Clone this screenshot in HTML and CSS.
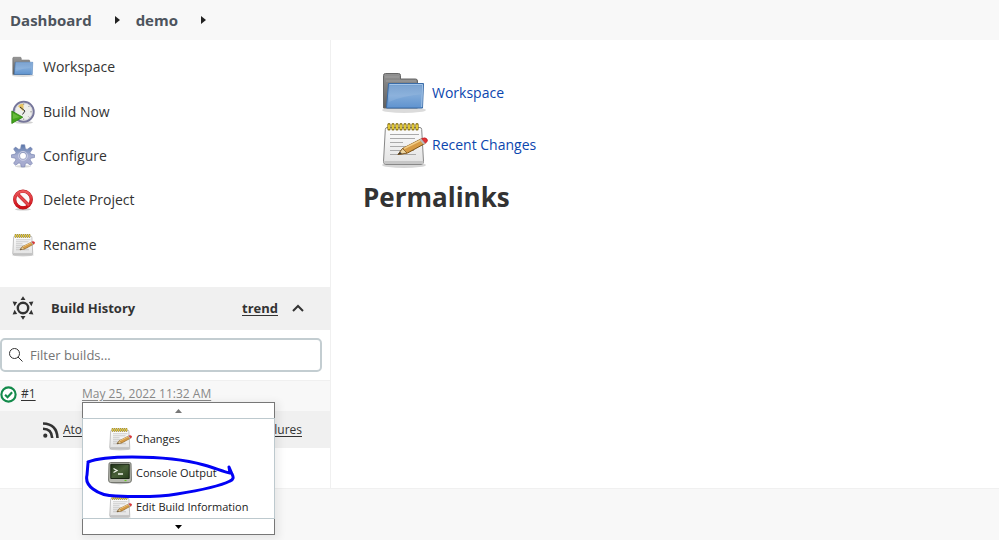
FILE: index.html
```html
<!DOCTYPE html>
<html lang="en">
<head>
<meta charset="utf-8">
<meta name="viewport" content="width=device-width, initial-scale=1">
<title>demo [Jenkins]</title>
<link rel="stylesheet" href="styles.css">
</head>
<body>
<svg class="sprite" aria-hidden="true">
  <defs>
    <linearGradient id="g-blue" x1="0" y1="0" x2="0" y2="1"><stop offset="0" stop-color="#6c98cb"/><stop offset=".5" stop-color="#7fa9d8"/><stop offset="1" stop-color="#5f93cf"/></linearGradient>
    <linearGradient id="g-grey" x1="0" y1="0" x2="0" y2="1"><stop offset="0" stop-color="#929292"/><stop offset="1" stop-color="#5e5e5e"/></linearGradient>
    <linearGradient id="g-paper" x1="0" y1="0" x2="0" y2="1"><stop offset="0" stop-color="#fdfdfd"/><stop offset="1" stop-color="#e2e2e2"/></linearGradient>
    <linearGradient id="g-gear" x1="0" y1="0" x2="0" y2="1"><stop offset="0" stop-color="#5877aa"/><stop offset=".5" stop-color="#a9b0d2"/><stop offset="1" stop-color="#a5a8cd"/></linearGradient>
    <linearGradient id="g-term" x1="0" y1="0" x2="1" y2="1"><stop offset="0" stop-color="#1d3014"/><stop offset=".5" stop-color="#496038"/><stop offset="1" stop-color="#263d1c"/></linearGradient>
    <linearGradient id="g-red" x1="0" y1="0" x2="0" y2="1"><stop offset="0" stop-color="#ed5a5e"/><stop offset="1" stop-color="#cc0c14"/></linearGradient>
  </defs>
  <symbol id="folder" viewBox="0 0 48 48">
    <ellipse cx="24" cy="41" rx="22" ry="3" fill="#000" opacity=".14"/>
    <path d="M3.500 39V6.500q0-2 2-2h13q2 0 2 2V10h15q2 0 2 2v27z" fill="url(#g-grey)" stroke="#666" />
    <path d="M5 8h14M6 12h30" stroke="#aaa" opacity=".7"/>
    <path d="M8.500 14.500h35l-1 24.500h-36z" fill="url(#g-blue)" stroke="#3a6ca8"/>
    <path d="M9.500 15.500h33l-.8 22.500" fill="none" stroke="#a5c5e8"/>
    <path d="M9.500 16.500h32l-.4 9Q25 26 9 33z" fill="#fff" opacity=".1"/>
  </symbol>
  <symbol id="notepad" viewBox="0 0 48 48">
    <ellipse cx="24" cy="44" rx="22" ry="3" fill="#000" opacity=".16"/>
    <path d="M7 6.500h33q1.500 0 1.700 2l1.800 32q0 3-2.500 3H6q-2.500 0-2.500-3L5.300 8.500Q5.500 6.500 7 6.500z" fill="url(#g-paper)" stroke="#888"/>
    <path d="M4 40h39v3H5z" fill="#c6c6c6"/>
    <path d="M10 13.500h29M10 17.500h25M10 21.500h13M10 25.500h25M10 29.500h24M10 33.500h26" stroke="#aaa" stroke-width="1.100"/>
    <path d="M9 8V3.500m4 4.500V3.500m4 4.500V3.500m4 4.500V3.500m4 4.500V3.500m4 4.500V3.500m4 4.500V3.500m4 4.500V3.500" stroke="#80690f" stroke-width="3.200" stroke-linecap="round"/>
    <path d="M9 7.500V4m4 3.500V4m4 3.500V4m4 3.500V4m4 3.500V4m4 3.500V4m4 3.500V4m4 3.500V4" stroke="#f1d83b" stroke-width="1.700" stroke-linecap="round"/>
    <path d="M18 33.500l4.500-6L41 18l4 4.500-17.500 9.500z" fill="#d69b45" stroke="#7f5313"/>
    <path d="M24 27.500L41 19" stroke="#f2cd87" stroke-width="1.600"/>
    <path d="M18 33.500l4.500-6 4.500 4.500z" fill="#ecd4a0" stroke="#77501c" stroke-width=".7"/>
    <path d="M18 33.500l2-2.600 2 1.700z" fill="#333"/>
    <path d="M39.500 18.700L42 17.300l4 4.700-2.500 1.500z" fill="#bbb"/>
    <path d="M41.500 17.500q4-1.500 5.500.5t-1.500 4.300z" fill="#e33235" stroke="#b51d20" stroke-width=".6"/>
  </symbol>
  <symbol id="clock" viewBox="0 0 24 24">
    <ellipse cx="13" cy="22.500" rx="9" ry="1.300" opacity=".18"/>
    <circle cx="12.700" cy="11.700" r="10" fill="#eeeeea" stroke="#76769a" stroke-width="2"/>
    <circle cx="12.700" cy="11.700" r="8.700" fill="none" stroke="#c9c9d5" stroke-width=".7"/>
    <path d="M12.500 11.500L7 6.300q2.500-3 5.500-2.300z" fill="#e6c262"/>
    <path d="M9 7l5 4-2.500 3.500" fill="none" stroke="#333" stroke-width="1"/>
    <path d="M12.700 3.500v1.300m8 7h-1.300m-6.700 8v-1.300m5.600-12.400l-.8.800m.8 10.500l-.8-.8" stroke="#888"/>
    <path d="M.8 11l11 6.200L.8 23.500z" fill="#43a41c" stroke="#2d8110" stroke-width=".8"/>
    <path d="M1.800 13l7 4-7 2z" fill="#68bb3c"/>
  </symbol>
  <symbol id="gear" viewBox="0 0 24 24">
    <ellipse cx="12" cy="22.300" rx="8" ry="1.200" opacity=".15"/>
    <path fill-rule="evenodd" fill="url(#g-gear)" stroke="#7480ad" stroke-width=".6" d="M10.300.8h3.400l.7 3.900 1.700.7 3.400-2.300 1.900 1.900-2.300 3.400.7 1.700 3.700.7v2.700l-3.700.7-.7 1.700 2.300 3.400-1.900 1.900-3.400-2.300-1.700.7-.7 3.400h-3.400l-.7-3.400-1.700-.7-3.400 2.300-1.900-1.900 2.300-3.400-.7-1.700-3.700-.7v-2.700l3.700-.7.7-1.700-2.300-3.400 1.900-1.900 3.400 2.300 1.700-.7zM12 8.400a3.500 3.500 0 1 0 0 7a3.500 3.500 0 1 0 0-7z"/>
    <circle cx="12" cy="11.900" r="4.500" fill="none" stroke="#d2d6e9" stroke-width=".8"/>
  </symbol>
  <symbol id="forbid" viewBox="0 0 24 24">
    <ellipse cx="12" cy="21.300" rx="8" ry="1.300" opacity=".2"/>
    <circle cx="12" cy="11.500" r="8.300" fill="#fafafa" stroke="#b4141a" stroke-width="3.200"/>
    <path d="M6 5.500l12 12" stroke="#c8262c" stroke-width="3.200"/>
    <circle cx="12" cy="11.500" r="8.300" fill="none" stroke="url(#g-red)" stroke-width="2.400"/>
    <path d="M6 5.500l12 12" stroke="#e2474c" stroke-width="2.200"/>
  </symbol>
  <symbol id="terminal" viewBox="0 0 24 24">
    <ellipse cx="12" cy="21.800" rx="10" ry="1.500" opacity=".25"/>
    <path d="M2.500 1.500h19q1.500 0 1.500 1.500l.4 16q0 2.500-2 2.500H2.600q-2 0-2-2.500L1 3q0-1.500 1.500-1.500z" fill="#b7b9b0" stroke="#73756e"/>
    <path d="M2.800 3.300h18.400v14.200H2.800z" fill="url(#g-term)" stroke="#182412"/>
    <path d="M5.500 7.500l3.500 2-3.500 2M10 13h5" fill="none" stroke="#eef3e8" stroke-width="1.300"/>
    <path d="M16.500 19.500h2" stroke="#64c91f" stroke-width="1.200"/>
  </symbol>
  <symbol id="sun" viewBox="0 0 24 24">
    <circle cx="12" cy="12" r="5.200" fill="none" stroke="#333" stroke-width="2.400"/>
    <path d="M12 .3l2.500 3.700h-5zM12 23.700l2.500-3.700h-5zM1.600 5.600L6.200 6 3.600 10.300zM22.400 5.600L17.800 6l2.600 4.300zM1.600 18.400l4.600-.4-2.600-4.300zM22.400 18.400l-4.600-.4 2.600-4.300z" fill="#333"/>
  </symbol>
  <symbol id="rss" viewBox="0 0 16 16">
    <circle cx="2.300" cy="13.700" r="2.100" fill="#333"/>
    <path d="M0 6.800q8.700 0 9.200 9.200M0 1.500q14 .5 14.500 14.500" fill="none" stroke="#333" stroke-width="2.600"/>
  </symbol>
</svg>

<header class="breadcrumbs">
  <nav class="crumbs" aria-label="Breadcrumb">
    <a href="#">Dashboard</a>
    <svg class="crumb-arrow" viewBox="0 0 5 8" aria-hidden="true"><path d="M0 0l5 4-5 4z"/></svg>
    <a href="#">demo</a>
    <svg class="crumb-arrow" viewBox="0 0 5 8" aria-hidden="true"><path d="M0 0l5 4-5 4z"/></svg>
  </nav>
</header>

<div class="page">
  <aside class="side">
    <nav class="tasks" aria-label="Project">
      <a class="task" href="#"><svg class="icon"><use href="#folder"/></svg>Workspace</a>
      <a class="task" href="#"><svg class="icon"><use href="#clock"/></svg>Build Now</a>
      <a class="task" href="#"><svg class="icon"><use href="#gear"/></svg>Configure</a>
      <a class="task" href="#"><svg class="icon"><use href="#forbid"/></svg>Delete Project</a>
      <a class="task" href="#"><svg class="icon"><use href="#notepad"/></svg>Rename</a>
    </nav>

    <section class="history">
      <div class="history-head">
        <svg class="icon"><use href="#sun"/></svg>
        <h2>Build History</h2>
        <a class="trend" href="#">trend</a>
        <button class="collapse" type="button" aria-label="Collapse">
          <svg viewBox="0 0 12 8" aria-hidden="true"><path d="M1 7l5-5 5 5"/></svg>
        </button>
      </div>

      <div class="filter">
        <svg class="filter-icon" viewBox="0 0 14 14" aria-hidden="true"><circle cx="5.500" cy="5.500" r="5"/><path d="M9 9l4.500 4.500"/></svg>
        <input type="text" placeholder="Filter builds..." aria-label="Filter builds">
      </div>

      <div class="build">
        <svg class="status" viewBox="0 0 16 16" aria-label="Success"><circle cx="8" cy="8" r="6.700"/><path d="M4.800 8.200l2.300 2.300 4.300-4.700"/></svg>
        <a class="build-number" href="#">#1</a>
        <a class="build-date" href="#">May 25, 2022 11:32 AM</a>

        <div class="menu">
          <button class="menu-scroll" type="button" aria-label="Scroll up" disabled><svg viewBox="0 0 7 4"><path d="M0 4l3.500-4L7 4z"/></svg></button>
          <div class="menu-body">
            <a class="menu-item" href="#"><svg class="icon"><use href="#notepad"/></svg>Changes</a>
            <a class="menu-item" href="#"><svg class="icon"><use href="#terminal"/></svg>Console Output</a>
            <a class="menu-item" href="#"><svg class="icon"><use href="#notepad"/></svg>Edit Build Information</a>
          </div>
          <button class="menu-scroll" type="button" aria-label="Scroll down"><svg viewBox="0 0 7 4"><path d="M0 0h7L3.500 4z"/></svg></button>
          <svg class="scribble" viewBox="0 0 156 48" aria-hidden="true"><path d="M4 7C14 3 34 2 48 2C76 2 99 4 120 10C131 13 140 17 146 18L145 12L148 19Q151 24 146 26C134 32 112 36 93 39C75 42 52 42 32 41Q18 41 9 34Q1 28 3 20L4 8"/></svg>
        </div>
      </div>

      <div class="feeds">
        <svg class="rss"><use href="#rss"/></svg>
        <a href="#">Atom feed for all</a>
        <a class="feed-failures" href="#">Atom feed for failures</a>
      </div>
    </section>
  </aside>

  <main class="main">
    <div class="links">
      <a class="link" href="#"><svg class="icon-large"><use href="#folder"/></svg>Workspace</a>
      <a class="link" href="#"><svg class="icon-large"><use href="#notepad"/></svg>Recent Changes</a>
    </div>
    <h1>Permalinks</h1>
  </main>
</div>
<footer class="footer"></footer>
</body>
</html>
```
FILE: styles.css
```css
* {
  box-sizing: border-box;
}

body {
  margin: 0;
  min-height: 100vh;
  display: flex;
  flex-direction: column;
  background: #fff;
  color: #333;
  font: 13px/20px "Segoe UI", "Open Sans", "Noto Sans", sans-serif;
}

a {
  color: inherit;
}

svg {
  display: block;
  flex: none;
}

.sprite {
  position: absolute;
  width: 0;
  height: 0;
}

.icon {
  width: 24px;
  height: 24px;
}

.breadcrumbs {
  height: 40px;
  padding: 0 10px;
  background: #f8f8f8;
}

.crumbs {
  height: 40px;
  display: flex;
  align-items: center;
  color: #4d545d;
  font-size: 15px;
  font-weight: 700;
}

.crumbs a {
  text-decoration: none;
}

.crumb-arrow {
  width: 5px;
  height: 8px;
  margin: 0 16px 0 23px;
  fill: #222;
}

.page {
  flex: 1;
  display: grid;
  grid-template-columns: 331px 1fr;
}

.side {
  border-right: 1px solid #f0f0f0;
}

.tasks {
  display: grid;
  grid-auto-rows: 1fr;
  min-height: 222px;
  margin: 5px 0 20px;
}

.task {
  display: flex;
  align-items: center;
  gap: 8px;
  padding-left: 11px;
  font-size: 14px;
  text-decoration: none;
}

.history-head {
  display: flex;
  align-items: center;
  height: 43px;
  padding: 0 26px 2px 11px;
  background: #f0f0f0;
}

h2 {
  flex: 1;
  margin: 0 0 0 16px;
  font-size: 13px;
  font-weight: 700;
}

.trend {
  font-weight: 700;
  text-underline-offset: 2px;
}

.collapse {
  margin-left: 14px;
  padding: 0;
  border: 0;
  background: none;
}

.collapse svg {
  width: 12px;
  height: 8px;
  fill: none;
  stroke: #333;
  stroke-width: 2;
}

.filter {
  display: flex;
  align-items: center;
  gap: 7px;
  height: 34px;
  margin: 8px 8px 8px 0;
  padding-left: 7px;
  border: 2px solid #c3cdd1;
  border-radius: 5px;
}

.filter-icon {
  width: 14px;
  height: 14px;
  fill: none;
  stroke: #333;
}

.filter input {
  flex: 1;
  min-width: 0;
  padding: 0;
  border: 0;
  outline: 0;
  background: none;
  font: inherit;
}

.filter input::placeholder {
  color: #757575;
}

.build {
  position: relative;
  display: grid;
  grid-template-columns: 17px 61px auto;
  column-gap: 4px;
  align-items: center;
  justify-content: start;
  height: 31px;
  padding-bottom: 4px;
  border-top: 1px solid #f0f0f0;
  background: #f8f8f8;
  font-size: 12px;
}

.build-number,
.build-date {
  text-underline-offset: 2px;
}

.build-date {
  margin-left: -4px;
  color: #888;
}

.status {
  width: 17px;
  height: 17px;
  fill: #fff;
  stroke: #138a4b;
  stroke-width: 2;
}

.feeds {
  display: flex;
  align-items: center;
  gap: 4px;
  height: 37px;
  padding: 0 28px 0 43px;
  background: #f0f0f0;
  font-size: 12px;
}

.feeds a {
  text-underline-offset: 2px;
  white-space: nowrap;
}

.feeds .feed-failures {
  margin-left: auto;
}

.rss {
  width: 16px;
  height: 16px;
}

.menu {
  position: absolute;
  top: 21px;
  left: 82px;
  width: 193px;
  color: #222;
  box-shadow: 2px 2px 8px 2px rgba(0, 0, 0, 0.07);
}

.menu-scroll {
  display: flex;
  align-items: center;
  justify-content: center;
  width: 100%;
  height: 17px;
  padding: 0;
  border: 1px solid #777;
  background: #fff;
}

.menu-scroll:first-child {
  height: 16px;
  border-bottom: 0;
}

.menu-scroll:nth-child(3) {
  height: 16px;
  border-top: 0;
}

.menu-scroll svg {
  width: 7px;
  height: 4px;
  fill: #000;
}

.menu-scroll:disabled svg {
  fill: #777;
}

.menu-body {
  height: 101px;
  padding-top: 3px;
  overflow: hidden;
  border: 1px solid #bdc9ce;
  background: #fff;
}

.menu-item {
  display: flex;
  align-items: center;
  gap: 4px;
  height: 34px;
  padding-left: 25px;
  font-size: 11px;
  text-decoration: none;
  white-space: nowrap;
}

.scribble {
  position: absolute;
  top: 53px;
  left: 2px;
  width: 156px;
  height: 48px;
  fill: none;
  stroke: #0202f5;
  stroke-width: 3;
  stroke-linecap: round;
  stroke-linejoin: round;
  pointer-events: none;
}

.main {
  padding: 29px 32px;
}

.links {
  display: grid;
  gap: 4px;
  padding-left: 17px;
}

.link {
  display: flex;
  align-items: center;
  gap: 4px;
  color: #0b46ae;
  font-size: 14px;
  text-decoration: none;
}

.icon-large {
  width: 48px;
  height: 48px;
}

h1 {
  margin: 10px 0 0;
  font-size: 26px;
  line-height: 36px;
  font-weight: 700;
}

.footer {
  height: 52px;
  border-top: 1px solid #f0f0f0;
  background: #f8f8f8;
}
```
